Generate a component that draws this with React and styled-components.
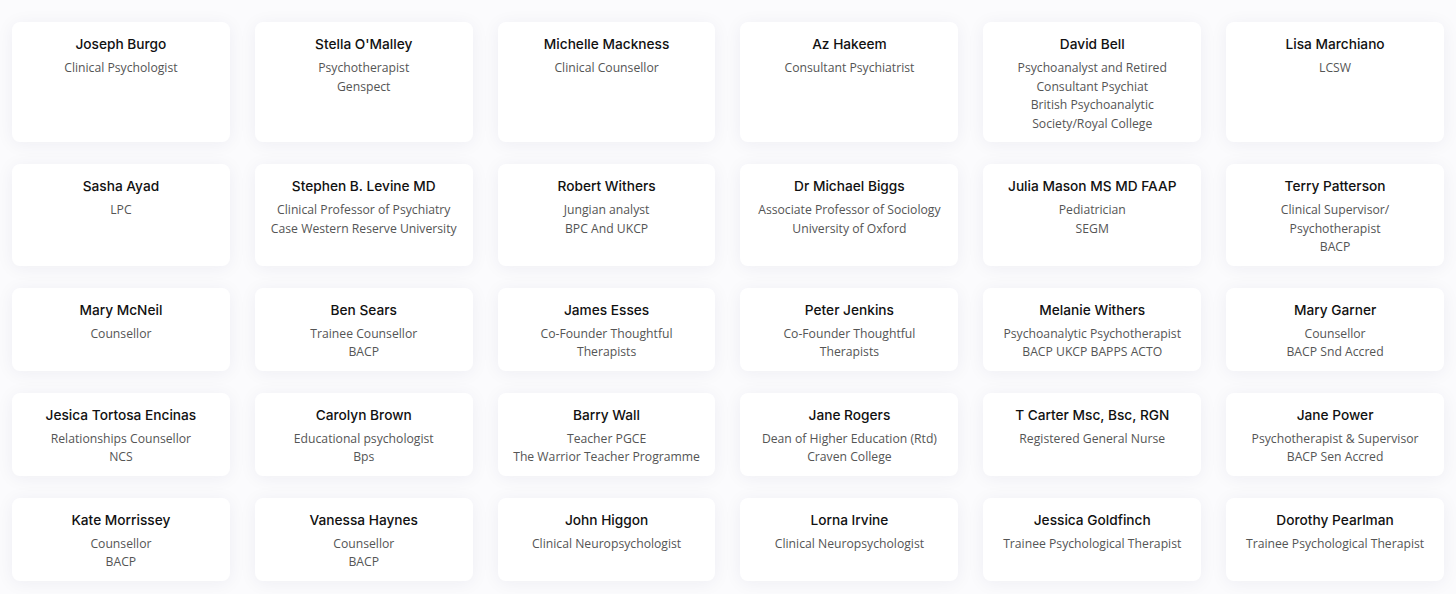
import React from 'react';
import styled, { createGlobalStyle } from 'styled-components';

const people = [
  { name: 'Joseph Burgo', lines: ['Clinical Psychologist'] },
  { name: "Stella O'Malley", lines: ['Psychotherapist', 'Genspect'] },
  { name: 'Michelle Mackness', lines: ['Clinical Counsellor'] },
  { name: 'Az Hakeem', lines: ['Consultant Psychiatrist'] },
  {
    name: 'David Bell',
    lines: [
      'Psychoanalyst and Retired',
      'Consultant Psychiat',
      'British Psychoanalytic',
      'Society/Royal College',
    ],
  },
  { name: 'Lisa Marchiano', lines: ['LCSW'] },
  { name: 'Sasha Ayad', lines: ['LPC'] },
  {
    name: 'Stephen B. Levine MD',
    lines: ['Clinical Professor of Psychiatry', 'Case Western Reserve University'],
  },
  { name: 'Robert Withers', lines: ['Jungian analyst', 'BPC And UKCP'] },
  {
    name: 'Dr Michael Biggs',
    lines: ['Associate Professor of Sociology', 'University of Oxford'],
  },
  { name: 'Julia Mason MS MD FAAP', lines: ['Pediatrician', 'SEGM'] },
  {
    name: 'Terry Patterson',
    lines: ['Clinical Supervisor/', 'Psychotherapist', 'BACP'],
  },
  { name: 'Mary McNeil', lines: ['Counsellor'] },
  { name: 'Ben Sears', lines: ['Trainee Counsellor', 'BACP'] },
  { name: 'James Esses', lines: ['Co-Founder Thoughtful', 'Therapists'] },
  { name: 'Peter Jenkins', lines: ['Co-Founder Thoughtful', 'Therapists'] },
  {
    name: 'Melanie Withers',
    lines: ['Psychoanalytic Psychotherapist', 'BACP UKCP BAPPS ACTO'],
  },
  { name: 'Mary Garner', lines: ['Counsellor', 'BACP Snd Accred'] },
  { name: 'Jesica Tortosa Encinas', lines: ['Relationships Counsellor', 'NCS'] },
  { name: 'Carolyn Brown', lines: ['Educational psychologist', 'Bps'] },
  { name: 'Barry Wall', lines: ['Teacher PGCE', 'The Warrior Teacher Programme'] },
  {
    name: 'Jane Rogers',
    lines: ['Dean of Higher Education (Rtd)', 'Craven College'],
  },
  { name: 'T Carter Msc, Bsc, RGN', lines: ['Registered General Nurse'] },
  {
    name: 'Jane Power',
    lines: ['Psychotherapist & Supervisor', 'BACP Sen Accred'],
  },
  { name: 'Kate Morrissey', lines: ['Counsellor', 'BACP'] },
  { name: 'Vanessa Haynes', lines: ['Counsellor', 'BACP'] },
  { name: 'John Higgon', lines: ['Clinical Neuropsychologist'] },
  { name: 'Lorna Irvine', lines: ['Clinical Neuropsychologist'] },
  { name: 'Jessica Goldfinch', lines: ['Trainee Psychological Therapist'] },
  { name: 'Dorothy Pearlman', lines: ['Trainee Psychological Therapist'] },
];

const GlobalStyle = createGlobalStyle`
  body {
    margin: 0;
    background: #fbfbfd;
    font-family: 'Open Sans', 'Liberation Sans', sans-serif;
  }
`;

const Grid = styled.section`
  display: grid;
  grid-template-columns: repeat(6, 1fr);
  column-gap: 25px;
  row-gap: 22px;
  padding: 22px 12px 13px;
`;

const Card = styled.article`
  background: #fff;
  border-radius: 8px;
  box-shadow: 0 2px 18px rgba(30, 40, 80, 0.06);
  padding: 11px 6px 9px;
  text-align: center;
`;

const Name = styled.h4`
  margin: 0 0 4px;
  font-family: 'Inter', 'Liberation Sans', sans-serif;
  font-weight: 500;
  font-size: 13.7px;
  line-height: 22px;
  color: #111;
`;

const Line = styled.p`
  margin: 0;
  font-size: 12.2px;
  line-height: 18.5px;
  color: #555;
`;

const App = () => {
  return (
    <>
      <GlobalStyle />
      <Grid>
        {people.map((person, index) => (
          <Card key={index}>
            <Name>{person.name}</Name>
            {person.lines.map((line, i) => (
              <Line key={i}>{line}</Line>
            ))}
          </Card>
        ))}
      </Grid>
    </>
  );
};

export default App;
